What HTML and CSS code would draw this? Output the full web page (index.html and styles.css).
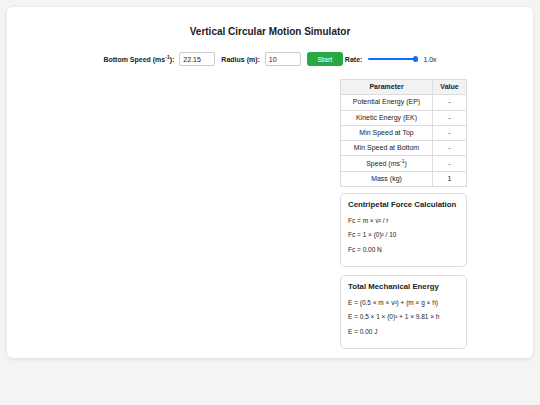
FILE: index.html
```html
<!DOCTYPE html>
<html lang="en">
<head>
<meta charset="utf-8">
<title>Vertical Circular Motion Simulator</title>
<link rel="stylesheet" href="styles.css">
</head>
<body>
<div class="container">
  <h1 class="title">Vertical Circular Motion Simulator</h1>
  <div class="controls">
    <label class="ctl-label">Bottom Speed (ms<sup>-1</sup>):</label>
    <input class="ctl-input" type="text" value="22.15">
    <label class="ctl-label">Radius (m):</label>
    <input class="ctl-input" type="text" value="10">
    <button class="start-btn">Start</button>
    <label class="ctl-label rate-label">Rate:</label>
    <input class="rate-slider" type="range" min="0.1" max="1" step="0.1" value="1">
    <span class="rate-value">1.0x</span>
  </div>
  <div class="main">
    <canvas class="sim-canvas" width="257" height="269"></canvas>
    <div class="panel">
      <table class="params">
        <thead>
          <tr><th>Parameter</th><th>Value</th></tr>
        </thead>
        <tbody>
          <tr><td>Potential Energy (EP)</td><td>-</td></tr>
          <tr><td>Kinetic Energy (EK)</td><td>-</td></tr>
          <tr><td>Min Speed at Top</td><td>-</td></tr>
          <tr><td>Min Speed at Bottom</td><td>-</td></tr>
          <tr><td>Speed (ms<sup>-1</sup>)</td><td>-</td></tr>
          <tr><td>Mass (kg)</td><td>1</td></tr>
        </tbody>
      </table>
      <div class="card">
        <h3 class="card-title">Centripetal Force Calculation</h3>
        <p class="card-line">Fc = m × v² / r</p>
        <p class="card-line">Fc = 1 × (0)² / 10</p>
        <p class="card-line">Fc = 0.00 N</p>
      </div>
      <div class="card">
        <h3 class="card-title">Total Mechanical Energy</h3>
        <p class="card-line">E = (0.5 × m × v²) + (m × g × h)</p>
        <p class="card-line">E = 0.5 × 1 × (0)² + 1 × 9.81 × h</p>
        <p class="card-line">E = 0.00 J</p>
      </div>
    </div>
  </div>
</div>
</body>
</html>
```

FILE: styles.css
```css
html, body {
  margin: 0;
  padding: 0;
}
body {
  background: #f4f4f4;
  font-family: "Liberation Sans", Arial, Helvetica, sans-serif;
  color: #222;
  padding: 7px;
}
.container {
  background: #fff;
  border-radius: 6px;
  box-shadow: 0 1px 4px rgba(0, 0, 0, 0.1);
  padding: 19px 10px 9px;
}
.title {
  margin: 0;
  font-size: 10px;
  line-height: 12px;
  text-align: center;
  color: #222;
}
.controls {
  display: flex;
  align-items: center;
  justify-content: center;
  margin-top: 14px;
  height: 14px;
}
.ctl-label {
  font-size: 7px;
  font-weight: bold;
  margin-right: 5px;
  white-space: nowrap;
}
.ctl-label sup {
  font-size: 5px;
  line-height: 0;
}
.ctl-input {
  box-sizing: border-box;
  width: 36px;
  height: 14px;
  border: 1px solid #ccc;
  border-radius: 2px;
  padding: 0 3px;
  font-family: "Liberation Sans", Arial, sans-serif;
  font-size: 7px;
  color: #222;
  margin: 0 6px 0 0;
}
.start-btn {
  box-sizing: border-box;
  width: 36px;
  height: 14px;
  border: none;
  border-radius: 3px;
  background: #28a745;
  color: #fff;
  font-family: "Liberation Sans", Arial, sans-serif;
  font-size: 7px;
  padding: 0;
  margin: 0 2px 0 0;
}
.rate-label {
  margin-right: 6px;
}
.rate-slider {
  -webkit-appearance: none;
  appearance: none;
  width: 50px;
  height: 6px;
  margin: 0 5px 0 0;
  padding: 0;
  background: transparent;
}
.rate-slider::-webkit-slider-runnable-track {
  height: 2.5px;
  background: #0d6efd;
  border-radius: 2px;
}
.rate-slider::-webkit-slider-thumb {
  -webkit-appearance: none;
  appearance: none;
  width: 5.5px;
  height: 5.5px;
  border-radius: 50%;
  background: #0d6efd;
  margin-top: -1.5px;
  border: none;
}
.rate-value {
  font-size: 7px;
}
.main {
  display: flex;
  justify-content: center;
  gap: 10px;
  margin-top: 13px;
}
.sim-canvas {
  width: 257px;
  height: 269px;
  display: block;
}
.panel {
  width: 127px;
  display: flex;
  flex-direction: column;
}
.params {
  width: 127px;
  border-collapse: collapse;
  font-size: 7px;
  table-layout: fixed;
}
.params th, .params td {
  border: 1px solid #ddd;
  padding: 3.15px 2px;
  text-align: center;
  line-height: 8px;
  color: #222;
}
.params th {
  background: #f2f2f2;
  font-weight: bold;
}
.params th:first-child {
  width: 87px;
}
.params sup {
  font-size: 5px;
  line-height: 0;
}
.card {
  border: 1px solid #ddd;
  border-radius: 5px;
  padding: 6.25px 6px 5.5px 7px;
  margin-top: 6px;
}
.card + .card {
  margin-top: 8px;
}
.card-title {
  margin: 0 0 7.25px;
  font-size: 7.8px;
  line-height: 9.5px;
  white-space: nowrap;
  color: #222;
}
.card-line {
  margin: 6.5px 0;
  font-size: 6.5px;
  line-height: 8px;
  color: #222;
}
```
